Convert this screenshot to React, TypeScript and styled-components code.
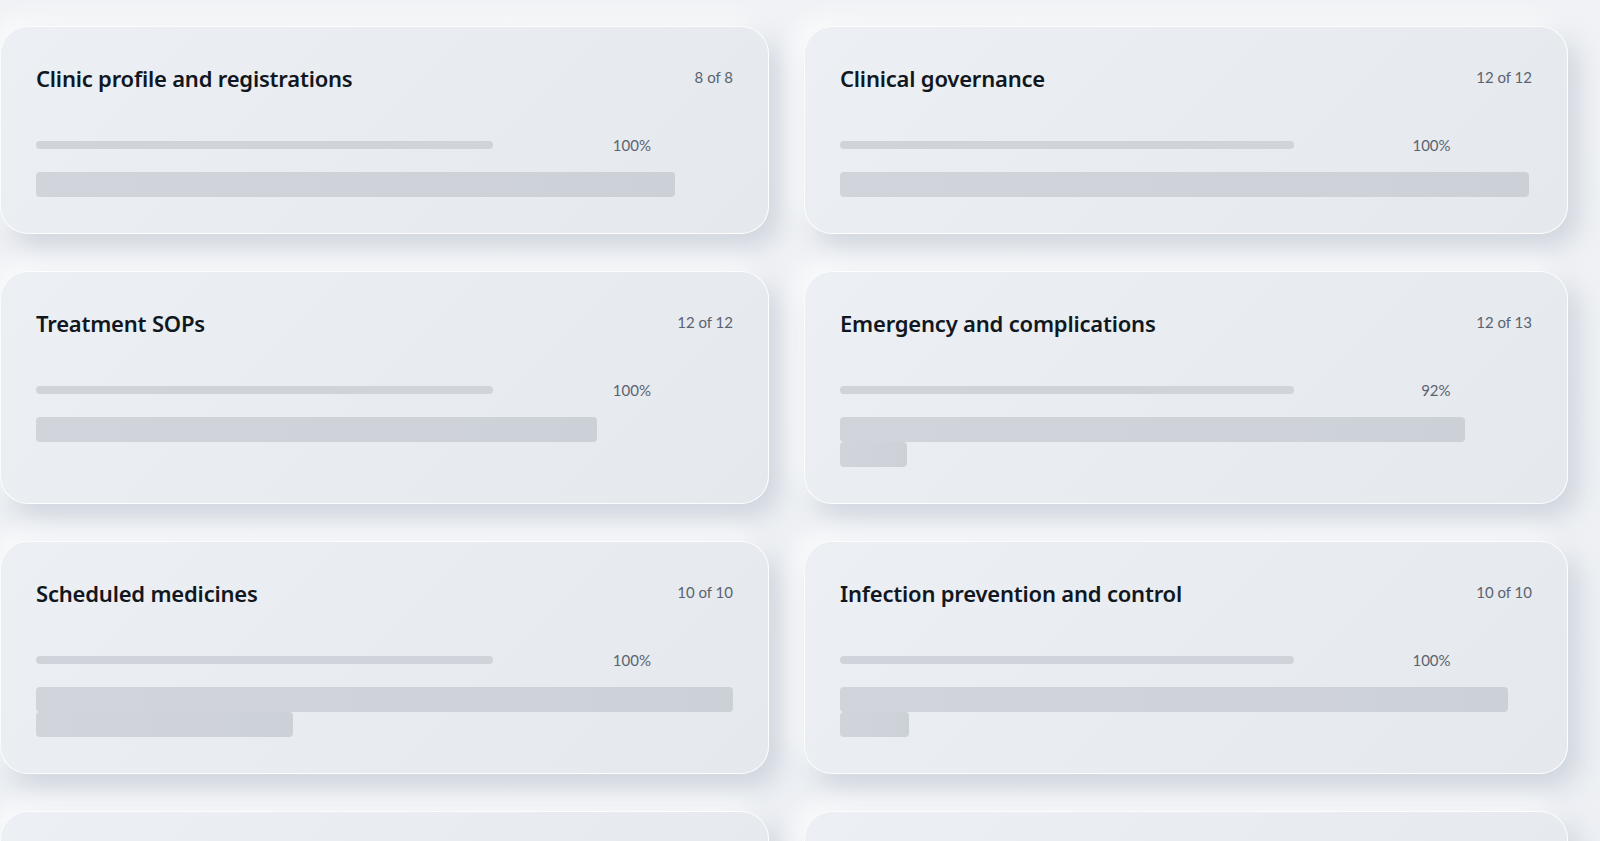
import React from "react";
import styled, { createGlobalStyle } from "styled-components";

const Global = createGlobalStyle`
  html, body {
    margin: 0;
    padding: 0;
    background: #edf0f3;
  }
  body {
    font-family: Lato, "Noto Sans", "Liberation Sans", sans-serif;
    -webkit-font-smoothing: antialiased;
  }
  * { box-sizing: border-box; }
`;

const Page = styled.main`
  min-height: 100vh;
  padding: 26px 32px 60px 0;
  background: linear-gradient(180deg, #f0f2f5 0%, #eceff3 100%);
`;

const Grid = styled.section`
  display: grid;
  grid-template-columns: 1fr 1fr;
  column-gap: 35px;
  row-gap: 37px;
  align-items: stretch;
`;

const Card = styled.article`
  display: flex;
  flex-direction: column;
  padding: 35px 35px 36px 35px;
  border-radius: 28px;
  border: 1px solid rgba(255, 255, 255, 0.85);
  background: linear-gradient(135deg, #eceff3 0%, #e8ebf0 55%, #e5e8ed 100%);
  box-shadow: 10px 12px 26px rgba(166, 177, 194, 0.45),
    -8px -8px 22px rgba(255, 255, 255, 0.85);
`;

const Header = styled.header`
  display: flex;
  align-items: center;
  justify-content: space-between;
  gap: 16px;
`;

const Title = styled.h3`
  margin: 0;
  font-family: "Noto Sans", Lato, sans-serif;
  font-size: 22px;
  line-height: 32px;
  font-weight: 600;
  color: #111720;
  letter-spacing: -0.2px;
`;

const Meta = styled.span`
  font-size: 15px;
  line-height: 20px;
  color: #5b6370;
  white-space: nowrap;
  margin-top: -2px;
`;

const ProgressRow = styled.div`
  display: grid;
  grid-template-columns: 457fr 158fr 82fr;
  align-items: center;
  height: 24px;
  margin-top: 39px;
`;

const Track = styled.div`
  height: 8px;
  border-radius: 4px;
  background: #d0d4da;
`;

const Percent = styled.span`
  font-size: 15px;
  line-height: 20px;
  color: #5b6370;
  text-align: right;
`;

const Description = styled.div`
  display: flex;
  flex-direction: column;
  align-items: flex-start;
  margin-top: 15px;
`;

const Line = styled.div<{ $w: number }>`
  height: 25px;
  width: ${(p) => p.$w}px;
  max-width: 100%;
  border-radius: 4px;
  background: linear-gradient(90deg, #d1d5db 0%, #cfd3d9 60%, #ccd1d8 100%);
`;

type Section = {
  title: string;
  done: number;
  total: number;
  lines: number[];
};

const sections: Section[] = [
  { title: "Clinic profile and registrations", done: 8, total: 8, lines: [639] },
  { title: "Clinical governance", done: 12, total: 12, lines: [689] },
  { title: "Treatment SOPs", done: 12, total: 12, lines: [561] },
  { title: "Emergency and complications", done: 12, total: 13, lines: [625, 67] },
  { title: "Scheduled medicines", done: 10, total: 10, lines: [697, 257] },
  { title: "Infection prevention and control", done: 10, total: 10, lines: [668, 69] },
  { title: "Equipment and facilities", done: 9, total: 9, lines: [610] },
  { title: "Patient records and consent", done: 11, total: 11, lines: [650] },
];

function SectionCard({ s }: { s: Section }) {
  const pct = Math.round((s.done / s.total) * 100);
  return (
    <Card>
      <Header>
        <Title>{s.title}</Title>
        <Meta>
          {s.done} of {s.total}
        </Meta>
      </Header>
      <ProgressRow>
        <Track />
        <Percent>{pct}%</Percent>
      </ProgressRow>
      <Description>
        {s.lines.map((w, i) => (
          <Line key={i} $w={w} />
        ))}
      </Description>
    </Card>
  );
}

export default function App() {
  return (
    <>
      <Global />
      <Page>
        <Grid>
          {sections.map((s) => (
            <SectionCard key={s.title} s={s} />
          ))}
        </Grid>
      </Page>
    </>
  );
}
